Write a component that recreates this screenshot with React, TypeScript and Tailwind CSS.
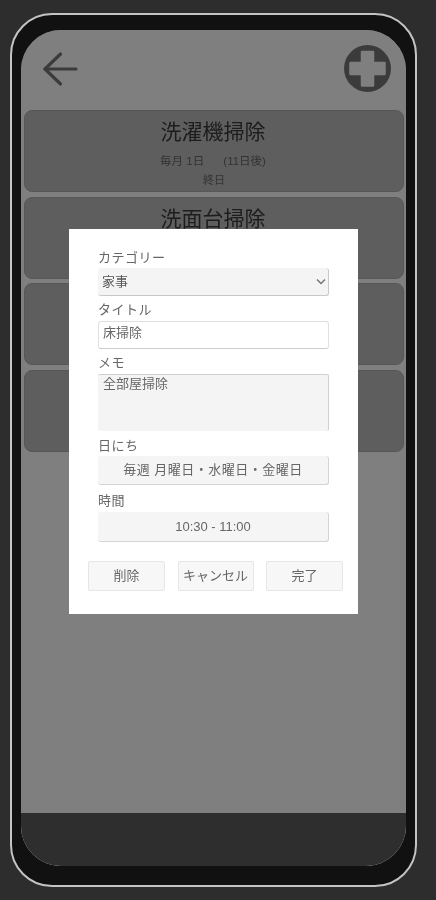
const font = { fontFamily: '"Liberation Sans", "Noto Sans CJK JP", sans-serif' };

function Card({ title, line1, line2 }: { title: string; line1?: React.ReactNode; line2?: string }) {
  return (
    <div className="h-[82px] rounded-[8px] border border-[#aeaeae] bg-[#bcbcbc] flex flex-col items-center pt-[6px] shrink-0">
      <div className="text-[21px] leading-[30px] text-[#3a3a3a] -ml-[2px]">{title}</div>
      {line1 && <div className="text-[11.5px] leading-[16px] mt-[6px] text-[#666] whitespace-pre -ml-[2px]">{line1}</div>}
      {line2 && <div className="text-[11px] leading-[16px] mt-[3px] text-[#666]">{line2}</div>}
    </div>
  );
}

function Label({ children }: { children: React.ReactNode }) {
  return <div className="text-[13px] leading-[16px] text-[#666] tracking-[0.5px]">{children}</div>;
}

const readField = "w-[231px] rounded-[3px] border-b border-r border-[#d4d4d4] bg-[#f5f5f5] flex items-center justify-center text-[13px] text-[#666]";
const btn = "h-[30px] rounded-[2px] border border-[#e6e6e6] bg-[#f7f7f7] text-[13px] text-[#666] flex items-center justify-center";

export default function App() {
  return (
    <div style={font} className="h-[900px] w-[436px] bg-[#2d2d2d] pl-[10px] pt-[13px] overflow-hidden blur-[0.5px]">
      <div className="w-[407px] h-[874px] rounded-[42px] border-2 border-[#c4c4c4] bg-[#111] pl-[9px] pr-[9px] pt-[15px]">
        <div className="relative w-[385px] h-[836px] rounded-[40px] overflow-hidden bg-white flex flex-col">
          <div className="h-[80px] shrink-0 flex items-center justify-between pl-[21px] pr-[15px] pb-[3px]">
            <svg width="36" height="36" viewBox="0 0 36 36" fill="none" stroke="#777" strokeWidth="3.2" strokeLinecap="round" strokeLinejoin="round">
              <path d="M34 18H3" />
              <path d="M18.500 3 3 18 18.500 33" />
            </svg>
            <svg width="47" height="47" viewBox="0 0 47 47">
              <circle cx="23.5" cy="23.5" r="23.5" fill="#777" />
              <path d="M18 7h11v11h11.500v11H29v11.500H18V29H6.500V18H18z" fill="#fff" stroke="#fff" strokeWidth="2.500" strokeLinejoin="round" />
            </svg>
          </div>
          <div className="flex-1 flex flex-col gap-[4.5px] px-[3px] mr-[-1px]">
            <Card title="洗濯機掃除" line1={"毎月 1日      (11日後)"} line2="終日" />
            <Card title="洗面台掃除" />
            <Card title="" />
            <Card title="" />
          </div>
          <div className="h-[53px] shrink-0 bg-[#5c5c5c]" />
          <div className="absolute inset-0 bg-black/50 flex justify-center pt-[199px]">
            <div className="w-[289px] h-[385px] bg-white pt-[21px] pl-[29px] flex flex-col items-start">
              <Label>カテゴリー</Label>
              <div className="relative mt-[2px]">
                <select defaultValue="家事" style={font} className="appearance-none block w-[231px] h-[28px] rounded-[3px] border-b border-r border-[#c8c8c8] bg-[#f4f4f4] text-[13px] text-[#555] pl-[4px]">
                  <option>家事</option>
                </select>
                <svg className="absolute right-[3px] top-[10px]" width="10" height="8" viewBox="0 0 10 8" fill="none" stroke="#777" strokeWidth="1.5">
                  <path d="M1 1.500 5 5.500 9 1.500" />
                </svg>
              </div>
              <div className="mt-[6px]"><Label>タイトル</Label></div>
              <input defaultValue="床掃除" style={font} className="mt-[3px] w-[231px] h-[28px] rounded-[3px] border border-[#e0e0e0] border-b-[#cccccc] bg-white text-[13px] text-[#666] px-[4px] pb-[7px]" />
              <div className="mt-[6px]"><Label>メモ</Label></div>
              <textarea defaultValue="全部屋掃除" style={font} className="mt-[3px] w-[231px] h-[57px] resize-none rounded-[2px] border-t border-r border-[#d0d0d0] bg-[#f4f4f4] text-[13px] leading-[16px] text-[#666] px-[5px] pt-[1px]" />
              <div className="mt-[7px]"><Label>日にち</Label></div>
              <div className={`${readField} mt-[2px] h-[29px] tracking-[0.5px]`}>毎週 月曜日・水曜日・金曜日</div>
              <div className="mt-[8px]"><Label>時間</Label></div>
              <div className={`${readField} mt-[3px] h-[30px]`}>10:30 - 11:00</div>
              <div className="mt-[19px] -ml-[10px] flex gap-[12.5px]">
                <div className={`${btn} w-[77px]`}>削除</div>
                <div className={`${btn} w-[76px]`}>キャンセル</div>
                <div className={`${btn} w-[77px]`}>完了</div>
              </div>
            </div>
          </div>
        </div>
      </div>
    </div>
  );
}
